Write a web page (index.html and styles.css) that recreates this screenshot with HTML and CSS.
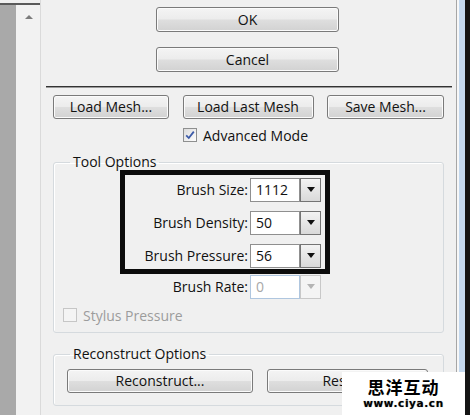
FILE: index.html
```html
<!DOCTYPE html>
<html>
<head>
<meta charset="utf-8">
<link rel="stylesheet" href="styles.css">
</head>
<body>
<div class="side">
  <div class="gutter"></div>
  <div class="scroll"><span class="arrow"></span></div>
</div>
<div class="main">
  <div class="top">
    <button class="btn btn-wide">OK</button>
    <button class="btn btn-wide">Cancel</button>
  </div>
  <div class="sep"></div>
  <div class="body">
    <div class="mesh-row">
      <button class="btn btn-load">Load Mesh...</button>
      <button class="btn btn-last">Load Last Mesh</button>
      <button class="btn btn-save">Save Mesh...</button>
    </div>
    <label class="check-row adv">
      <span class="box checked"><svg viewBox="0 0 12 12" width="12" height="12"><path d="M2.2 6.3 L4.8 9 L9.8 2.6" fill="none" stroke="#3b5aa8" stroke-width="1.8"/></svg></span>
      <span>Advanced Mode</span>
    </label>
    <fieldset class="group tool">
      <legend>Tool Options</legend>
      <div class="highlight">
        <div class="row">
          <span class="lbl">Brush Size:</span>
          <div class="combo"><span class="field">1112</span><span class="drop"><span class="tri"></span></span></div>
        </div>
        <div class="row">
          <span class="lbl">Brush Density:</span>
          <div class="combo"><span class="field">50</span><span class="drop"><span class="tri"></span></span></div>
        </div>
        <div class="row">
          <span class="lbl">Brush Pressure:</span>
          <div class="combo"><span class="field">56</span><span class="drop"><span class="tri"></span></span></div>
        </div>
      </div>
      <div class="row rate">
        <span class="lbl">Brush Rate:</span>
        <div class="combo disabled"><span class="field">0</span><span class="drop"><span class="tri"></span></span></div>
      </div>
      <label class="check-row stylus">
        <span class="box dis"></span>
        <span>Stylus Pressure</span>
      </label>
    </fieldset>
    <fieldset class="group recon">
      <legend>Reconstruct Options</legend>
      <div class="recon-row">
        <button class="btn btn-recon">Reconstruct...</button>
        <button class="btn btn-restore">Restore</button>
      </div>
    </fieldset>
  </div>
</div>
<div class="rb1"></div>
<div class="rb2"></div>
<div class="rb3"></div>
<div class="rb4"></div>
<div class="watermark">
  <div class="wm-cn">思洋互动</div>
  <div class="wm-en">www.ciya.cn</div>
</div>
</body>
</html>
```
FILE: styles.css
```css
html, body {
  margin: 0;
  padding: 0;
}
body {
  width: 470px;
  height: 415px;
  overflow: hidden;
  display: flex;
  position: relative;
  background: #f0f0f0;
  font-family: "Open Sans", "Noto Sans", sans-serif;
  font-size: 14px;
  color: #111;
}
.side {
  width: 40px;
  display: flex;
  margin-top: 3px;
  border-top: 2px solid #5a5a5a;
}
.gutter {
  width: 16px;
  background: #a9a9a9;
}
.scroll {
  width: 24px;
  background: #f2f2f2;
  position: relative;
}
.arrow {
  position: absolute;
  left: 9px;
  top: 10px;
  width: 0;
  height: 0;
  border-left: 4px solid transparent;
  border-right: 4px solid transparent;
  border-bottom: 4px solid #7c7c7c;
}
.main {
  width: 415px;
  border-left: 1px solid #dadada;
  display: flex;
  flex-direction: column;
}
.top {
  display: flex;
  flex-direction: column;
  align-items: center;
  gap: 15px;
  padding-top: 7px;
}
.btn {
  font-family: inherit;
  font-size: 14px;
  color: #111;
  border: 1px solid #7a7a7a;
  border-radius: 3px;
  background: linear-gradient(#f4f4f4 0%, #ececec 48%, #dedede 52%, #d2d2d2 100%);
  box-shadow: inset 0 0 0 1px #fbfbfb;
  padding: 0;
  margin: 0;
  height: 24px;
  line-height: 20px;
}
.btn-wide {
  width: 183px;
  height: 25px;
  margin-right: 2px;
}
.sep {
  margin: 14px 4px 0 5px;
  height: 1px;
  background: #333;
  border-bottom: 1px solid #9a9a9a;
}
.body {
  padding: 0 12px 0 12px;
}
.mesh-row {
  display: flex;
  justify-content: space-between;
  margin-top: 7px;
}
.btn-load { width: 116px; }
.btn-last { width: 131px; }
.btn-save { width: 117px; }
.check-row {
  display: flex;
  align-items: center;
  gap: 6px;
}
.adv {
  margin-top: 9px;
  margin-left: 130px;
  height: 14px;
}
.box {
  width: 12px;
  height: 12px;
  border: 1px solid #8e8f8f;
  background: linear-gradient(135deg, #dcdcdc, #fdfdfd);
  display: inline-flex;
  align-items: center;
  justify-content: center;
  flex: none;
}
.box.dis {
  border-color: #c6c6c6;
  background: #f4f4f4;
}
.group {
  margin: 0;
  padding: 0;
  border: 1px solid #d5dade;
  border-radius: 3px;
  box-shadow: inset 1px 1px 0 #fff;
  min-width: 0;
}
.group legend {
  margin-left: 16px;
  padding: 0 3px;
  line-height: 16px;
}
.tool {
  margin-top: 12px;
  padding-bottom: 10px;
}
.highlight {
  margin-left: 66px;
  width: 210px;
  box-sizing: border-box;
  border: 5px solid #0c0c0c;
  padding: 2px 4px 1px 0;
  display: flex;
  flex-direction: column;
  gap: 8px;
}
.row {
  display: flex;
  justify-content: flex-end;
  align-items: center;
  gap: 2px;
  height: 25px;
}
.rate {
  margin-left: 66px;
  margin-top: 1px;
  width: 210px;
  box-sizing: border-box;
  padding-right: 9px;
  height: 23px;
}
.combo {
  display: flex;
  height: 24px;
}
.field {
  width: 50px;
  box-sizing: border-box;
  border: 1px solid #8f8f8f;
  background: #fff;
  padding-left: 5px;
  line-height: 22px;
}
.drop {
  width: 21px;
  box-sizing: border-box;
  border: 1px solid #747474;
  background: linear-gradient(#f3f3f3, #d9d9d9);
  display: flex;
  align-items: center;
  justify-content: center;
}
.tri {
  width: 0;
  height: 0;
  border-left: 4px solid transparent;
  border-right: 4px solid transparent;
  border-top: 5px solid #111;
}
.disabled .field {
  border-color: #afc6df;
  color: #a8a8a8;
}
.disabled .drop {
  border-color: #c8c8c8;
  background: #f4f4f4;
}
.disabled .tri {
  border-top-color: #b4b4b4;
}
.stylus {
  margin-top: 10px;
  margin-left: 9px;
  height: 14px;
  color: #9c9c9c;
}
.recon {
  margin-top: 13px;
  padding: 0 0 12px 13px;
}
.recon legend {
  margin-left: 3px;
}
.recon-row {
  display: flex;
  gap: 14px;
  margin-top: 7px;
}
.btn-recon { width: 186px; }
.btn-restore { width: 161px; }
.rb1 { width: 1px; background: #a6a6a6; }
.rb2 { width: 2px; background: #f7f7f7; }
.rb3 { width: 6px; background: #c4d9ef; }
.rb4 { width: 5px; background: #141414; }
.watermark {
  position: absolute;
  left: 342px;
  top: 372px;
  width: 123px;
  height: 43px;
  background: #fff;
  text-align: center;
  color: #000;
}
.wm-cn {
  font-family: "Noto Sans CJK SC", sans-serif;
  font-weight: 700;
  font-size: 17px;
  letter-spacing: 1px;
  line-height: 20px;
  margin-top: 5px;
}
.wm-en {
  font-family: "DejaVu Sans", sans-serif;
  font-weight: 700;
  font-size: 10.5px;
  letter-spacing: 0.6px;
  line-height: 12px;
  text-shadow: 0 0 1px #888;
}
```
